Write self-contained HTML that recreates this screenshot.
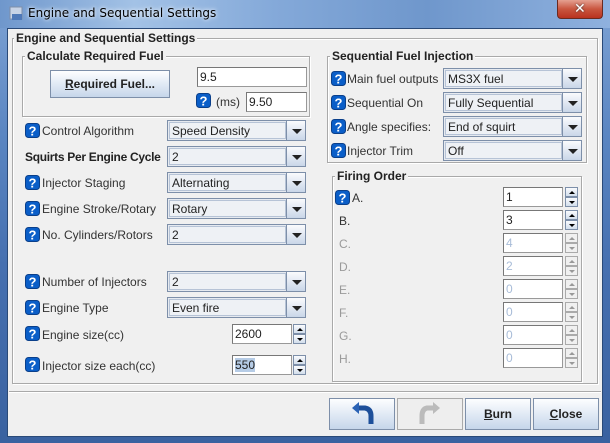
<!DOCTYPE html>
<html><head><meta charset="utf-8"><style>
*{box-sizing:border-box;margin:0;padding:0}
body{width:610px;height:443px;overflow:hidden;font-family:"Liberation Sans",sans-serif;font-size:12px;color:#222;position:relative;background:#4a74b0}
.a{position:absolute}
#frame{left:0;top:0;width:610px;height:443px;background:linear-gradient(180deg,#7ea3d4 0%,#5b86c2 30%,#4670b0 60%,#3a62a0 100%)}
#title{left:0;top:0;width:610px;height:28px;background:linear-gradient(90deg,#6f97cc 0%,#a3c2e6 22%,#84a9d9 45%,#6f97cc 70%,#8fb1de 100%)}
#ttext{left:28px;top:6px;font-family:"DejaVu Sans",sans-serif;font-size:12px;color:#000;text-shadow:0 0 6px #e6eef9,0 0 3px #eef3fa}
#close{left:557px;top:0;width:46px;height:19px;border:1px solid #6a2a20;border-top:none;border-radius:0 0 4px 4px;background:linear-gradient(#e4a091,#c9563f 50%,#b9321f 100%)}
#content{left:7px;top:28px;width:596px;height:409px;background:#f0f0f0;border:1px solid #2a4a78}
.grp{position:absolute;border:1px solid #a9a9a9;box-shadow:1px 1px 0 #fff inset,1px 1px 0 #fff}
.gt{position:absolute;background:#f0f0f0;font-weight:bold;font-size:12px;padding:0 2px;color:#222}
.help{position:absolute;width:15px;height:15px}
.lbl{position:absolute;font-size:12px;color:#333;white-space:nowrap}
.dis{color:#9a9a9a}
.combo{position:absolute;height:21px;border:1px solid #7d8fa9;background:#e6eaf0}
.combo .in{position:absolute;left:1px;top:1px;bottom:1px;right:19px;border:1px solid #b6c3d6;background:#eef1f5;padding-left:2px;line-height:16px;font-size:12px}
.combo .btn{position:absolute;right:0;top:0;bottom:0;width:19px;border-left:1px solid #7d8fa9;background:linear-gradient(#fafbfd,#c9d6e8)}
.combo .btn:after{content:"";position:absolute;left:5px;top:8px;border-left:5px solid transparent;border-right:5px solid transparent;border-top:5px solid #222}
.tf{position:absolute;height:20px;background:#fff;border:1px solid #999;border-top-color:#777;border-left-color:#777;padding-left:2px;line-height:18px;font-size:12px}
.sp{position:absolute;width:13px;height:20px}
.sp div{position:absolute;left:0;width:13px;height:10px;border:1px solid #7d8fa9;background:linear-gradient(#fafbfd,#d3deec)}
.sp .u{top:0}.sp .d{top:10px}
.sp .u:after{content:"";position:absolute;left:3px;top:3px;border-left:3px solid transparent;border-right:3px solid transparent;border-bottom:3px solid #000}
.sp .d:after{content:"";position:absolute;left:3px;top:3px;border-left:3px solid transparent;border-right:3px solid transparent;border-top:3px solid #000}
.sp.x div{border-color:#aaa;background:#f0f0f0}
.sp.x .u:after{border-bottom-color:#999}.sp.x .d:after{border-top-color:#999}
.bt{position:absolute;height:32px;border:1px solid #7d8fa9;background:linear-gradient(#fdfeff,#e4ecf6 45%,#c6d6ea);font-weight:bold;font-size:12px;text-align:center;line-height:30px;color:#222}
</style></head><body>
<div id="frame" class="a"></div>
<div id="title" class="a"></div>
<svg class="a" style="left:9px;top:6px" width="16" height="16"><rect x="1" y="1" width="12" height="12" fill="#c7d3e6" stroke="#7f8fa8"/><rect x="3" y="8" width="10" height="6" fill="#4f79b8"/></svg>
<div id="ttext" class="a">Engine and Sequential Settings</div>
<div id="close" class="a"><div class="a" style="left:16px;top:1px;color:#fff;font-weight:bold;font-size:14px;font-family:'DejaVu Sans',sans-serif;text-shadow:0 0 2px #333">✕</div></div>
<div id="content" class="a"></div>

<div class="grp" style="left:12px;top:38px;width:586px;height:346px"></div>
<div class="gt" style="left:14px;top:31px">Engine and Sequential Settings</div>
<div class="a" style="left:9px;top:391px;width:592px;height:2px;border-top:1px solid #a9a9a9;border-bottom:1px solid #fff"></div>

<div class="grp" style="left:22px;top:56px;width:288px;height:61px"></div>
<div class="gt" style="left:25px;top:49px">Calculate Required Fuel</div>
<div class="bt" style="left:50px;top:70px;width:120px;height:28px;line-height:26px"><u>R</u>equired Fuel...</div>
<div class="tf" style="left:197px;top:67px;width:110px">9.5</div>
<svg class="help" style="left:196px;top:93px" viewBox="0 0 15 15"><rect x="0.5" y="0.5" width="14" height="14" rx="3" fill="#0a5ec8" stroke="#0a3f8a"/><text x="7.5" y="12.5" font-family="Liberation Sans" font-weight="bold" font-size="13" fill="#fff" text-anchor="middle">?</text></svg>
<div class="lbl" style="left:216px;top:95px">(ms)</div>
<div class="tf" style="left:246px;top:92px;width:61px">9.50</div>

<div id="left"></div>

<div class="grp" style="left:327px;top:56px;width:260px;height:107px"></div>
<div class="gt" style="left:330px;top:49px">Sequential Fuel Injection</div>

<div class="grp" style="left:332px;top:176px;width:250px;height:206px"></div>
<div class="gt" style="left:335px;top:169px">Firing Order</div>

<div class="bt" style="left:329px;top:398px;width:66px"><svg width="30" height="28" style="margin-top:1px"><path d="M10 8 L18 8 Q24 9 24 16 L24 24" fill="none" stroke="#1d4f9a" stroke-width="5"/><path d="M5 8 L12 2 L12 14 Z" fill="#2a62b5"/></svg></div>
<div class="bt" style="left:397px;top:398px;width:66px;border-color:#aaa;background:#eee"><svg width="30" height="28" style="margin-top:1px"><path d="M19 8 L12 8 Q7 9 7 16 L7 24" fill="none" stroke="#bbb" stroke-width="5"/><path d="M25 8 L18 2 L18 14 Z" fill="#bbb"/></svg></div>
<div class="bt" style="left:465px;top:398px;width:66px"><u>B</u>urn</div>
<div class="bt" style="left:533px;top:398px;width:66px"><u>C</u>lose</div>

<script>
function help(x,y){return '<svg class="help" style="left:'+x+'px;top:'+y+'px" viewBox="0 0 15 15"><rect x="0.5" y="0.5" width="14" height="14" rx="3" fill="#0a5ec8" stroke="#0a3f8a"/><text x="7.5" y="12.5" font-family="Liberation Sans" font-weight="bold" font-size="13" fill="#fff" text-anchor="middle">?</text></svg>';}
function combo(x,y,w,t){return '<div class="combo" style="left:'+x+'px;top:'+y+'px;width:'+w+'px"><div class="in">'+t+'</div><div class="btn"></div></div>';}
var h='';
var rows=[[120,'Control Algorithm','Speed Density',1],[146,'Squirts Per Engine Cycle','2',0],[172,'Injector Staging','Alternating',1],[198,'Engine Stroke/Rotary','Rotary',1],[224,'No. Cylinders/Rotors','2',1],[271,'Number of Injectors','2',1],[297,'Engine Type','Even fire',1]];
rows.forEach(function(r){
 if(r[3]){h+=help(25,r[0]+3);h+='<div class="lbl" style="left:42px;top:'+(r[0]+4)+'px">'+r[1]+'</div>';}
 else h+='<div class="lbl" style="left:25px;top:'+(r[0]+4)+'px;font-weight:bold;color:#222;letter-spacing:-0.3px">'+r[1]+'</div>';
 h+=combo(167,r[0],139,r[2]);
});
[[324,'Engine size(cc)','2600',''],[355,'Injector size each(cc)','550','background:#b6cce6']].forEach(function(r){
 h+=help(25,r[0]+2);h+='<div class="lbl" style="left:42px;top:'+(r[0]+4)+'px">'+r[1]+'</div>';
 h+='<div class="tf" style="left:232px;top:'+r[0]+'px;width:60px"><span style="'+r[3]+'">'+r[2]+'</span></div>';
 h+='<div class="sp" style="left:293px;top:'+r[0]+'px"><div class="u"></div><div class="d"></div></div>';
});
[[68,'Main fuel outputs','MS3X fuel'],[92,'Sequential On','Fully Sequential'],[116,'Angle specifies:','End of squirt'],[140,'Injector Trim','Off']].forEach(function(r){
 h+=help(331,r[0]+3);h+='<div class="lbl" style="left:347px;top:'+(r[0]+4)+'px">'+r[1]+'</div>';
 h+=combo(443,r[0],139,r[2]);
});
var f=[['A.','1',0],['B.','3',0],['C.','4',1],['D.','2',1],['E.','0',1],['F.','0',1],['G.','0',1],['H.','0',1]];
f.forEach(function(r,i){var y=187+i*23;
 if(i==0)h+=help(335,y+3);
 h+='<div class="lbl'+(r[2]?' dis':'')+'" style="left:'+(i==0?352:339)+'px;top:'+(y+4)+'px">'+r[0]+'</div>';
 h+='<div class="tf" style="left:503px;top:'+y+'px;width:60px;'+(r[2]?'color:#a8bcd8':'')+'">'+r[1]+'</div>';
 h+='<div class="sp'+(r[2]?' x':'')+'" style="left:565px;top:'+y+'px"><div class="u"></div><div class="d"></div></div>';
});
document.getElementById('left').outerHTML=h;
</script>
</body></html>
